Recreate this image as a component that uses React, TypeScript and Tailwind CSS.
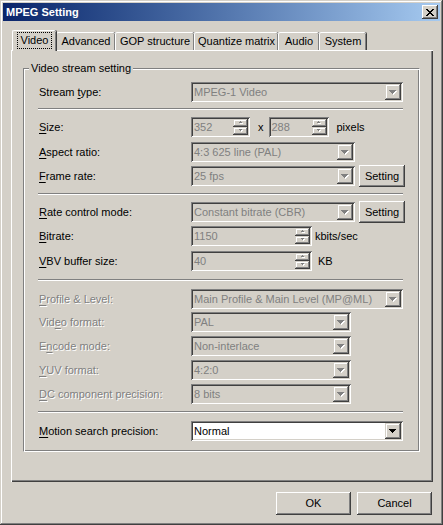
import React from "react";

const raised =
  "shadow-[inset_-1px_-1px_0_#404040,inset_1px_1px_0_#fff,inset_-2px_-2px_0_#808080]";
const raisedSmall =
  "shadow-[inset_-1px_-1px_0_#404040,inset_1px_1px_0_#d4d0c8,inset_-2px_-2px_0_#808080,inset_2px_2px_0_#fff]";
const sunken =
  "shadow-[inset_1px_1px_0_#808080,inset_-1px_-1px_0_#fff,inset_2px_2px_0_#404040,inset_-2px_-2px_0_#d4d0c8]";

function Arrow({ disabled }: { disabled?: boolean }) {
  const tri = (dx: number, dy: number, fill: string) => (
    <g fill={fill}>
      <rect x={0 + dx} y={0 + dy} width={7} height={1} />
      <rect x={1 + dx} y={1 + dy} width={5} height={1} />
      <rect x={2 + dx} y={2 + dy} width={3} height={1} />
      <rect x={3 + dx} y={3 + dy} width={1} height={1} />
    </g>
  );
  return (
    <svg width="8" height="5" shapeRendering="crispEdges">
      {disabled && tri(1, 1, "#fff")}
      {tri(0, 0, disabled ? "#808080" : "#000")}
    </svg>
  );
}

function SpinArrow({ up }: { up?: boolean }) {
  return (
    <svg width="6" height="4" shapeRendering="crispEdges">
      <g fill="#fff">
        {up ? (
          <>
            <rect x={3} y={1} width={1} height={1} />
            <rect x={2} y={2} width={3} height={1} />
          </>
        ) : (
          <>
            <rect x={2} y={1} width={3} height={1} />
            <rect x={3} y={2} width={1} height={1} />
          </>
        )}
      </g>
      <g fill="#808080">
        {up ? (
          <>
            <rect x={2} y={0} width={1} height={1} />
            <rect x={1} y={1} width={3} height={1} />
          </>
        ) : (
          <>
            <rect x={1} y={0} width={3} height={1} />
            <rect x={2} y={1} width={1} height={1} />
          </>
        )}
      </g>
    </svg>
  );
}

function Combo({
  value,
  width,
  enabled,
}: {
  value: string;
  width: string;
  enabled?: boolean;
}) {
  return (
    <div
      className={`${width} h-[20px] flex items-center p-[2px] ${sunken} ${
        enabled ? "bg-white text-black" : "bg-[#d4d0c8] text-[#808080]"
      }`}
    >
      <span className="flex-1 pl-[1px] whitespace-nowrap overflow-hidden">{value}</span>
      <div className={`w-[16px] h-[16px] flex items-center justify-center bg-[#d4d0c8] ${raisedSmall}`}>
        <Arrow disabled={!enabled} />
      </div>
    </div>
  );
}

function Spin({ value, width }: { value: string; width: string }) {
  return (
    <div className={`${width} h-[20px] flex items-center p-[2px] bg-[#d4d0c8] text-[#808080] ${sunken}`}>
      <span className="flex-1 pl-[1px]">{value}</span>
      <div className="w-[15px] h-[16px] flex flex-col">
        <div className={`h-[8px] flex items-center justify-center ${raisedSmall}`}>
          <SpinArrow up />
        </div>
        <div className={`h-[8px] flex items-center justify-center ${raisedSmall}`}>
          <SpinArrow />
        </div>
      </div>
    </div>
  );
}

function Btn({ label, width, height }: { label: string; width: string; height: string }) {
  return (
    <button className={`${width} ${height} bg-[#d4d0c8] text-black flex items-center justify-center ${raised}`}>
      {label}
    </button>
  );
}

function Label({
  pre,
  key_,
  post,
  disabled,
}: {
  pre?: string;
  key_: string;
  post: string;
  disabled?: boolean;
}) {
  return (
    <span
      className={`w-[152px] shrink-0 whitespace-nowrap ${
        disabled ? "text-[#808080] [text-shadow:1px_1px_0_#fff]" : "text-black"
      }`}
    >
      {pre}
      <span className="underline underline-offset-2">{key_}</span>
      {post}
    </span>
  );
}

function Separator({ className }: { className: string }) {
  return <div className={`w-[365px] -ml-[1px] h-[2px] border-t border-b border-t-[#808080] border-b-white ${className}`} />;
}

const tabs = [
  { name: "Video", w: "w-[44px]" },
  { name: "Advanced", w: "w-[59px]" },
  { name: "GOP structure", w: "w-[79px]" },
  { name: "Quantize matrix", w: "w-[84px]" },
  { name: "Audio", w: "w-[41px]" },
  { name: "System", w: "w-[47px]" },
];

export default function App() {
  return (
    <div className="w-[443px] h-[525px] bg-[#d4d0c8] p-[3px] flex flex-col font-['Liberation_Sans',Arial,sans-serif] text-[11px] leading-[13px] text-black shadow-[inset_-1px_-1px_0_#404040,inset_1px_1px_0_#d4d0c8,inset_-2px_-2px_0_#808080,inset_2px_2px_0_#fff]">
      {/* title bar */}
      <div className="h-[18px] flex items-center justify-between pl-[3px] pr-[2px] bg-linear-to-r from-[#0a246a] to-[#a6caf0]">
        <span className="font-bold text-white">MPEG Setting</span>
        <div className={`w-[16px] h-[14px] bg-[#d4d0c8] flex items-center justify-center ${raised}`}>
          <svg width="8" height="7" shapeRendering="crispEdges">
            <path d="M0 0h2v1h-2zM6 0h2v1h-2zM1 1h2v1h-2zM5 1h2v1h-2zM2 2h4v1h-4zM3 3h2v1h-2zM2 4h4v1h-4zM1 5h2v1h-2zM5 5h2v1h-2zM0 6h2v1h-2zM6 6h2v1h-2z" fill="#000" />
          </svg>
        </div>
      </div>

      <div className="px-[8px] flex flex-col">
        {/* tabs */}
        <div className="mt-[9px] h-[20px] flex items-end pl-[1px]">
          {tabs.map((t, i) =>
            i === 0 ? (
              <div
                key={t.name}
                className={`${t.w} h-[21px] -mb-[1px] relative z-10 bg-[#d4d0c8] rounded-t-[2px] border-t border-l border-white shadow-[inset_-1px_0_0_#808080,1px_0_0_#404040] flex items-start justify-center pt-[1px]`}
              >
                <span className="border border-dotted border-black px-[3px] py-[1px] mt-[0px]">{t.name}</span>
              </div>
            ) : (
              <div
                key={t.name}
                className={`${t.w} h-[18px] bg-[#d4d0c8] rounded-t-[2px] border-t border-l border-white shadow-[inset_-1px_0_0_#808080,1px_0_0_#404040] flex items-center justify-center`}
              >
                {t.name}
              </div>
            )
          )}
        </div>

        {/* tab panel */}
        <div className="w-[422px] h-[432px] pt-[12px] pl-[12px] shadow-[inset_1px_1px_0_#fff,inset_-1px_-1px_0_#404040,inset_-2px_-2px_0_#808080]">
          <fieldset className="w-[397px] border border-t-[#808080] border-l-[#808080] border-r-white border-b-white shadow-[inset_1px_1px_0_#fff,inset_-1px_-1px_0_#808080] pb-[10px]">
            <legend className="ml-[5px] px-[2px] bg-[#d4d0c8] leading-[13px]">Video stream setting</legend>
            <div className="pl-[15px] mt-[7px] flex flex-col">
              <div className="h-[20px] flex items-center">
                <Label pre="Stream " key_="t" post="ype:" />
                <Combo value="MPEG-1 Video" width="w-[212px]" />
              </div>
              <Separator className="mt-[6px]" />

              <div className="mt-[7px] h-[20px] flex items-center">
                <Label key_="S" post="ize:" />
                <Spin value="352" width="w-[59px]" />
                <span className="ml-[8px] mr-[5px]">x</span>
                <Spin value="288" width="w-[60px]" />
                <span className="ml-[8px]">pixels</span>
              </div>
              <div className="mt-[5px] h-[20px] flex items-center">
                <Label key_="A" post="spect ratio:" />
                <Combo value="4:3 625 line (PAL)" width="w-[164px]" />
              </div>
              <div className="mt-[4px] h-[20px] flex items-center">
                <Label key_="F" post="rame rate:" />
                <Combo value="25 fps" width="w-[164px]" />
                <div className="ml-[4px]">
                  <Btn label="Setting" width="w-[46px]" height="h-[22px]" />
                </div>
              </div>
              <Separator className="mt-[7px]" />

              <div className="mt-[7px] h-[20px] flex items-center">
                <Label key_="R" post="ate control mode:" />
                <Combo value="Constant bitrate (CBR)" width="w-[164px]" />
                <div className="ml-[4px]">
                  <Btn label="Setting" width="w-[46px]" height="h-[22px]" />
                </div>
              </div>
              <div className="mt-[4px] h-[20px] flex items-center">
                <Label key_="B" post="itrate:" />
                <Spin value="1150" width="w-[121px]" />
                <span className="ml-[3px]">kbits/sec</span>
              </div>
              <div className="mt-[5px] h-[20px] flex items-center">
                <Label key_="V" post="BV buffer size:" />
                <Spin value="40" width="w-[121px]" />
                <span className="ml-[6px]">KB</span>
              </div>
              <Separator className="mt-[8px]" />

              <div className="mt-[8px] h-[20px] flex items-center">
                <Label key_="P" post="rofile & Level:" disabled />
                <Combo value="Main Profile & Main Level (MP@ML)" width="w-[212px]" />
              </div>
              <div className="mt-[3px] h-[20px] flex items-center">
                <Label pre="Vid" key_="e" post="o format:" disabled />
                <Combo value="PAL" width="w-[160px]" />
              </div>
              <div className="mt-[4px] h-[20px] flex items-center">
                <Label pre="E" key_="n" post="code mode:" disabled />
                <Combo value="Non-interlace" width="w-[160px]" />
              </div>
              <div className="mt-[4px] h-[20px] flex items-center">
                <Label key_="Y" post="UV format:" disabled />
                <Combo value="4:2:0" width="w-[160px]" />
              </div>
              <div className="mt-[4px] h-[20px] flex items-center">
                <Label key_="D" post="C component precision:" disabled />
                <Combo value="8 bits" width="w-[160px]" />
              </div>
              <Separator className="mt-[7px]" />

              <div className="mt-[8px] h-[20px] flex items-center">
                <Label key_="M" post="otion search precision:" />
                <Combo value="Normal" width="w-[212px]" enabled />
              </div>
            </div>
          </fieldset>
        </div>

        {/* buttons */}
        <div className="mt-[10px] flex justify-end gap-[6px] pr-[0px]">
          <Btn label="OK" width="w-[75px]" height="h-[23px]" />
          <Btn label="Cancel" width="w-[75px]" height="h-[23px]" />
        </div>
      </div>
    </div>
  );
}
